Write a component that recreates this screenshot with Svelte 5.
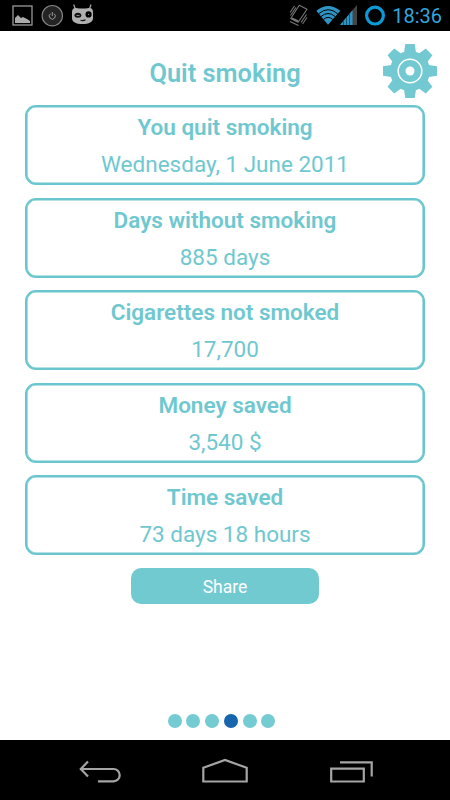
<script>
  let cards = $state([
    { title: 'You quit smoking', value: 'Wednesday, 1 June 2011' },
    { title: 'Days without smoking', value: '885 days' },
    { title: 'Cigarettes not smoked', value: '17,700' },
    { title: 'Money saved', value: '3,540 $' },
    { title: 'Time saved', value: '73 days 18 hours' }
  ]);
  let page = $state(3);

  const pages = [0, 1, 2, 3, 4, 5];
  const teeth = [0, 45, 90, 135, 180, 225, 270, 315];
</script>

<div class="screen">
  <header class="status-bar">
    <svg width="95" height="31" viewBox="0 0 95 31">
      <rect x="13" y="6" width="19" height="19" fill="none" stroke="#999" stroke-width="1.3" />
      <path d="M15 23v-5l3-3 3 3 2-1 4 2 3 2v2z" fill="#aaa" />
      <circle cx="52.3" cy="15.7" r="10.2" fill="#242424" stroke="#858585" stroke-width="1.1" />
      <path d="M50.5 13.7a3 3 0 1 0 3.6 0M52.3 12v4" fill="none" stroke="#999" stroke-width="1" />
      <path d="M75.5 9.5L73.7 4.5M89.3 9.5L91 4.5" stroke="#aaa" stroke-width="1.2" />
      <path d="M72 12c0-3 2-4.5 4-4q6.5 1 13 0c2-.5 4 1 4 4v6c0 4-4 6-10.5 6S72 22 72 18z" fill="#b0b0b0" />
      <ellipse cx="77.9" cy="15.2" rx="3.4" ry="2.5" fill="#111" />
      <path d="M76.5 15.5h3" stroke="#888" stroke-width="1" />
      <circle cx="88.6" cy="14.4" r="3.1" fill="#000" />
      <circle cx="88.6" cy="14.4" r=".6" fill="#888" />
      <path d="M80.5 20.3q3 .8 5-.6" fill="none" stroke="#111" stroke-width="1.1" />
    </svg>
    <div class="status-right">
      <svg width="102" height="31" viewBox="288 0 102 31">
        <g fill="none" stroke="#777" stroke-width="1.1">
          <path d="M299.3 5.3L307 9.2L298.2 22.3L290.7 18.5z" stroke-linejoin="round" />
          <path d="M291.8 18.4L298 21.2" stroke-width="2.2" />
          <path d="M294.5 6L290 12.5M296 7.5L290.5 15.500M306.500 14.500L301 22.500M307 17.500L302.500 24M290 21.500L298.500 25.500" />
        </g>
        <path d="M328 24.8L316.3 10.8Q328 1.2 340.3 10.8z" fill="#2f94c4" />
        <path d="M318.7 13.7q9.5-8 19 0M321 16.5q7-6 14.2 0M323.5 19.4q4.6-4 9.3 0" fill="none" stroke="#000" />
        <path d="M340 25L357 5v20z" fill="#444" />
        <path d="M340 25L352.5 10.3V25z" fill="#2f94c4" />
        <path d="M343.5 20.5V25M346.5 17v8M349.5 13.5V25" stroke="#164863" stroke-width=".8" />
        <circle cx="375" cy="15.6" r="8.4" fill="none" stroke="#0a9bd6" stroke-width="3.2" />
      </svg>
      <span class="clock">18:36</span>
    </div>
  </header>

  <main>
    <div class="title-row">
      <h1>Quit smoking</h1>
      <button class="settings" aria-label="Settings">
        <svg width="56" height="56" viewBox="-28 -28 56 56">
          <g fill="#72c9d1">
            <circle r="20" />
            {#each teeth as angle}
              <path d="M-4.7-27H4.7L6.2-17H-6.2z" transform="rotate({angle})" />
            {/each}
          </g>
          <circle r="11.8" fill="none" stroke="#fff" stroke-width="1.5" />
          <circle r="4.5" fill="#fff" />
        </svg>
      </button>
    </div>

    <div class="cards">
      {#each cards as card}
        <section class="card">
          <h2>{card.title}</h2>
          <p>{card.value}</p>
        </section>
      {/each}
    </div>

    <button class="share">Share</button>

    <div class="dots">
      {#each pages as i}
        <button class="dot" class:active={page === i} aria-label="Page {i + 1}" onclick={() => (page = i)}></button>
      {/each}
    </div>
  </main>

  <nav>
    <svg width="450" height="60" viewBox="0 0 450 60" fill="none" stroke="#a5a5a5" stroke-width="2.2">
      <path d="M88 21.5l-7.2 7.5 7.2 7.5M81 29h32.5a6.2 6.2 0 0 1 0 12.4H98" />
      <path d="M203.3 41.5V27.8L225 20l21.7 7.8v13.7z" />
      <path d="M331.2 28.6h32.6v12.9h-32.6zM340 22.3h31.7v14.2" />
    </svg>
  </nav>
</div>

<style>
  :global(body) {
    background: #fff;
  }

  .screen {
    display: flex;
    flex-direction: column;
    width: 450px;
    height: 800px;
    overflow: hidden;
    background: #fff;
    color: #6fc8d0;
    font-family: Roboto, sans-serif;
  }

  .status-bar {
    display: flex;
    justify-content: space-between;
    height: 31px;
    background: #000;
  }

  .status-right {
    display: flex;
    align-items: center;
    padding-right: 8px;
  }

  .status-right svg {
    margin-right: 2px;
  }

  .clock {
    padding-top: 2px;
    color: #31a6dc;
    font-size: 20px;
    line-height: 31px;
  }

  main {
    display: flex;
    flex: 1;
    flex-direction: column;
    align-items: center;
  }

  button {
    padding: 0;
    border: 0;
    font: inherit;
  }

  .title-row {
    display: grid;
    grid-template-columns: 1fr auto 1fr;
    width: 100%;
    height: 74px;
  }

  h1 {
    grid-column: 2;
    margin: 0;
    font-size: 25.4px;
    font-weight: 600;
    line-height: 85px;
  }

  .settings {
    justify-self: end;
    height: 56px;
    margin: 12px 12px 0 0;
    background: none;
  }

  .cards {
    display: flex;
    flex-direction: column;
    gap: 12.5px;
    width: 400px;
  }

  .card {
    box-sizing: border-box;
    height: 80px;
    padding-top: 2.3px;
    border: 2px solid #6ac6ce;
    border-radius: 11px;
    box-shadow: inset 0 0 0 0.6px #6ac6ce;
    text-align: center;
  }

  h2,
  p {
    margin: 0;
    font-size: 22.5px;
    line-height: 36.8px;
  }

  h2 {
    font-weight: 600;
  }

  p {
    font-weight: 400;
  }

  .share {
    width: 188px;
    height: 36px;
    margin-top: 12.5px;
    border-radius: 10px;
    background: #72cad1;
    color: #fff;
    font-size: 17.5px;
    line-height: 38px;
  }

  .dots {
    display: flex;
    gap: 4.8px;
    margin: auto 7px 12.5px 0;
  }

  .dot {
    width: 14px;
    height: 14px;
    border-radius: 50%;
    background: #75cbd2;
  }

  .dot.active {
    background: #1765ad;
  }

  nav {
    height: 60px;
    background: #000;
  }
</style>
